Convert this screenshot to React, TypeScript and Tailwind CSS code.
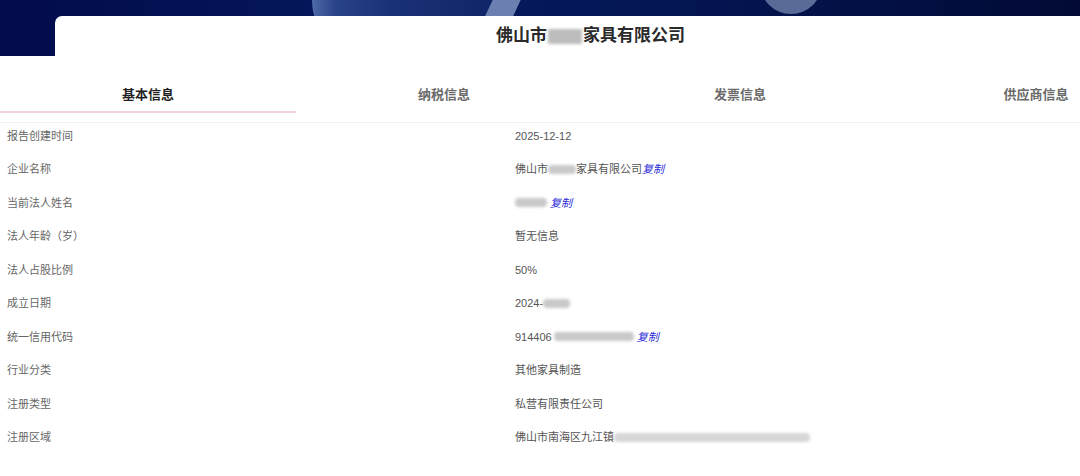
import type { ReactNode } from "react";

const FONT = {
  fontFamily: '"Liberation Sans", Arial, "Noto Sans CJK SC", sans-serif',
};

const TABS = ["基本信息", "纳税信息", "发票信息", "供应商信息"];

function Blur({ w, className = "" }: { w: number; className?: string }) {
  return (
    <span
      className={`inline-block h-[9px] rounded-sm bg-[#c9c9c9] blur-[1.5px] align-middle ${className}`}
      style={{ width: w }}
    />
  );
}

function Copy() {
  return <span className="italic text-[#2a2ad8]">复制</span>;
}

const ROWS: { label: string; value: ReactNode }[] = [
  { label: "报告创建时间", value: "2025-12-12" },
  {
    label: "企业名称",
    value: (
      <>
        佛山市
        <Blur w={28} />
        家具有限公司
        <Copy />
      </>
    ),
  },
  {
    label: "当前法人姓名",
    value: (
      <>
        <Blur w={32} className="mr-[3px]" />
        <Copy />
      </>
    ),
  },
  { label: "法人年龄（岁）", value: "暂无信息" },
  { label: "法人占股比例", value: "50%" },
  {
    label: "成立日期",
    value: (
      <>
        2024-
        <Blur w={27} />
      </>
    ),
  },
  {
    label: "统一信用代码",
    value: (
      <>
        914406
        <Blur w={80} className="ml-[2px] mr-[3px]" />
        <Copy />
      </>
    ),
  },
  { label: "行业分类", value: "其他家具制造" },
  { label: "注册类型", value: "私营有限责任公司" },
  {
    label: "注册区域",
    value: (
      <>
        佛山市南海区九江镇
        <Blur w={196} className="bg-[#d6d6d6]" />
      </>
    ),
  },
];

export default function App() {
  return (
    <main
      className="relative h-[476px] w-[1080px] overflow-hidden bg-white"
      style={FONT}
    >
      {/* banner */}
      <div className="relative h-[56px] w-full overflow-hidden bg-[linear-gradient(90deg,#020b4c_0%,#051a5e_40%,#041655_60%,#020a35_100%)]">
        <div className="absolute left-[312px] top-[-60px] h-[120px] w-[190px] rounded-l-[80px] bg-[linear-gradient(90deg,#4f6aa8_0%,#2a4488_12%,#1a3276_40%,#0e2466_100%)]" />
        <div className="absolute left-[488px] top-[-10px] h-[40px] w-[28px] -skew-x-[25deg] bg-[#6b80b0]" />
        <div className="absolute left-[760px] top-[-48px] h-[62px] w-[62px] rounded-full bg-[#5a6b98]" />
      </div>

      {/* header card */}
      <div className="relative -mt-[40px] ml-[55px] flex h-[40px] items-center justify-center rounded-tl-[7px] bg-white pl-[46px]">
        <h1 className="text-[17px] font-bold text-[#2a2a2a]">
          佛山市
          <span className="mx-[1px] inline-block h-[15px] w-[34px] bg-[#bdbdbd] blur-[1.5px] align-middle" />
          家具有限公司
        </h1>
      </div>

      {/* tabs */}
      <div className="mt-[22px] flex w-[1184px] border-b border-[#f1f1f1]">
        {TABS.map((tab, i) => (
          <div key={tab} className="flex w-[296px] flex-col items-center">
            <div
              className={`flex h-[33px] items-center text-[13px] font-bold ${
                i === 0 ? "text-[#1f1f1f]" : "text-[#6a6a6a]"
              }`}
            >
              {tab}
            </div>
            <div
              className={`h-[2px] w-full ${i === 0 ? "bg-[#f6d4dc]" : "bg-transparent"}`}
            />
            <div className="h-[9px]" />
          </div>
        ))}
      </div>

      {/* rows */}
      <div className="-mt-[4px] flex flex-col">
        {ROWS.map((row) => (
          <div
            key={row.label}
            className="flex h-[33.5px] items-center text-[11px] text-[#666]"
          >
            <div className="w-[515px] pl-[7px]">{row.label}</div>
            <div className="flex items-center whitespace-nowrap text-[#555]">
              {row.value}
            </div>
          </div>
        ))}
      </div>
    </main>
  );
}
